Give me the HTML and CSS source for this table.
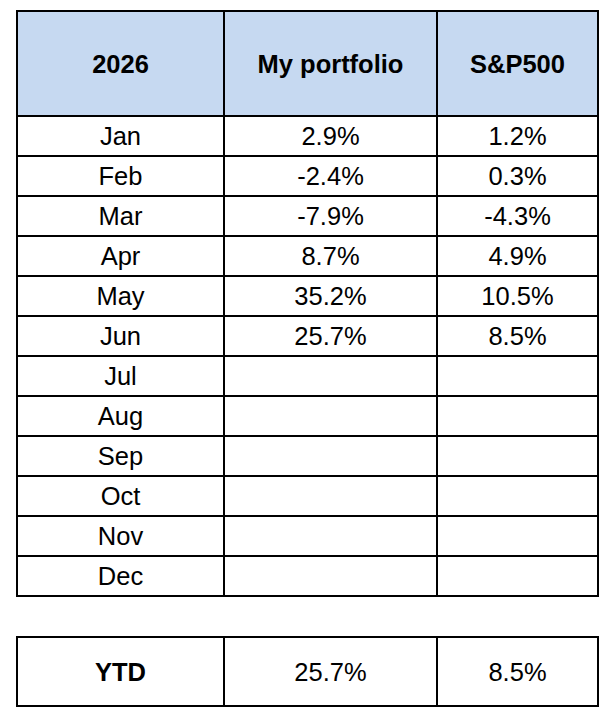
FILE: index.html
```html
<!DOCTYPE html>
<html>
<head>
<meta charset="utf-8">
<link rel="stylesheet" href="styles.css">
</head>
<body>
<table class="grid">
  <colgroup><col class="c1"><col class="c2"><col class="c3"></colgroup>
  <thead>
    <tr class="head"><th>2026</th><th>My portfolio</th><th>S&amp;P500</th></tr>
  </thead>
  <tbody>
    <tr><td>Jan</td><td>2.9%</td><td>1.2%</td></tr>
    <tr><td>Feb</td><td>-2.4%</td><td>0.3%</td></tr>
    <tr><td>Mar</td><td>-7.9%</td><td>-4.3%</td></tr>
    <tr><td>Apr</td><td>8.7%</td><td>4.9%</td></tr>
    <tr><td>May</td><td>35.2%</td><td>10.5%</td></tr>
    <tr><td>Jun</td><td>25.7%</td><td>8.5%</td></tr>
    <tr><td>Jul</td><td></td><td></td></tr>
    <tr><td>Aug</td><td></td><td></td></tr>
    <tr><td>Sep</td><td></td><td></td></tr>
    <tr><td>Oct</td><td></td><td></td></tr>
    <tr><td>Nov</td><td></td><td></td></tr>
    <tr><td>Dec</td><td></td><td></td></tr>
  </tbody>
</table>
<table class="grid ytd">
  <colgroup><col class="c1"><col class="c2"><col class="c3"></colgroup>
  <tbody>
    <tr class="total"><th>YTD</th><td>25.7%</td><td>8.5%</td></tr>
  </tbody>
</table>
</body>
</html>
```
FILE: styles.css
```css
html, body {
  background: #ffffff;
}
body {
  margin: 10px 0 0 16px;
  font-family: "Liberation Sans", Arial, sans-serif;
  font-size: 25.5px;
  color: #000000;
}
.grid {
  box-sizing: border-box;
  width: 583px;
  table-layout: fixed;
  border-collapse: separate;
  border-spacing: 0;
  border-top: 2px solid #000;
  border-left: 2px solid #000;
}
.c1 { width: 207px; }
.c2 { width: 213px; }
.c3 { width: 161px; }
.grid th,
.grid td {
  padding: 0;
  height: 38px;
  border-right: 2px solid #000;
  border-bottom: 2px solid #000;
  text-align: center;
  vertical-align: middle;
  font-weight: normal;
  line-height: 28px;
  white-space: nowrap;
  overflow: hidden;
}
.head th {
  height: 103px;
  background: #c6d9f1;
  font-weight: bold;
}
.ytd {
  margin-top: 39px;
}
.total th,
.total td {
  height: 67px;
}
.total th {
  font-weight: bold;
}
```
